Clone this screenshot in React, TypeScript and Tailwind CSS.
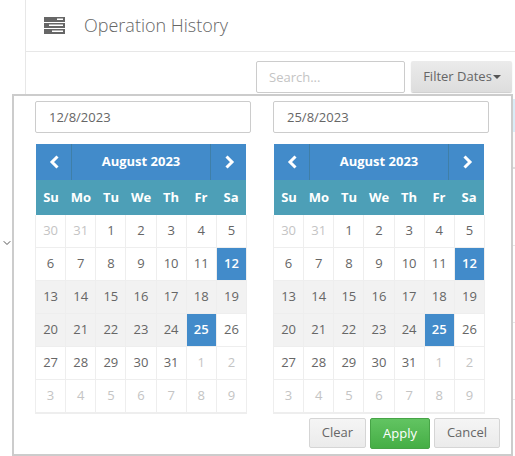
import React from "react";
import { ChevronDown } from "lucide-react";

const weekDays = ["Su", "Mo", "Tu", "We", "Th", "Fr", "Sa"];

// [label, kind] : o = other month, n = normal, r = in range, s = selected
const cells: [string, string][] = [
  ["30", "o"], ["31", "o"], ["1", "n"], ["2", "n"], ["3", "n"], ["4", "n"], ["5", "n"],
  ["6", "n"], ["7", "n"], ["8", "n"], ["9", "n"], ["10", "n"], ["11", "n"], ["12", "s"],
  ["13", "r"], ["14", "r"], ["15", "r"], ["16", "r"], ["17", "r"], ["18", "r"], ["19", "r"],
  ["20", "r"], ["21", "r"], ["22", "r"], ["23", "r"], ["24", "r"], ["25", "s"], ["26", "n"],
  ["27", "n"], ["28", "n"], ["29", "n"], ["30", "n"], ["31", "n"], ["1", "o"], ["2", "o"],
  ["3", "o"], ["4", "o"], ["5", "o"], ["6", "o"], ["7", "o"], ["8", "o"], ["9", "o"],
];

const cellStyles: Record<string, string> = {
  o: "bg-white text-[#c4c4c4]",
  n: "bg-white text-[#666666]",
  r: "bg-[#f2f2f2] text-[#666666]",
  s: "bg-[#428bca] text-white font-semibold",
};

const ArrowLeft = () => (
  <svg width="12" height="14" viewBox="0 0 12 14" fill="none" className="ml-[2px]">
    <path d="M8.5 1.5 3 7l5.5 5.5" stroke="white" strokeWidth="3" />
  </svg>
);

const ArrowRight = () => (
  <svg width="12" height="14" viewBox="0 0 12 14" fill="none">
    <path d="M3.5 1.5 9 7l-5.5 5.5" stroke="white" strokeWidth="3" />
  </svg>
);

const Calendar = ({ value }: { value: string }) => (
  <div className="w-[216px]">
    <input
      readOnly
      value={value}
      className="block h-[32px] w-[216px] rounded-[2px] border border-[#cccccc] bg-white px-[13px] text-[13px] text-[#666666] outline-none"
    />
    <div className="mt-[11px] w-[211px] pl-px">
      <div className="flex h-[36px] bg-[#428bca] text-white">
        <div className="flex w-[36px] items-center justify-center border-r border-[#3f7fa8]">
          <ArrowLeft />
        </div>
        <div className="flex flex-1 items-center justify-center text-[13px] font-bold">August 2023</div>
        <div className="flex w-[36px] items-center justify-center border-l border-[#3f7fa8]">
          <ArrowRight />
        </div>
      </div>
      <div className="grid h-[35px] grid-cols-7 bg-[#4d9fb7] text-white">
        {weekDays.map((d) => (
          <div key={d} className="flex items-center justify-center text-[13px] font-bold">{d}</div>
        ))}
      </div>
      <div className="-ml-px grid w-[212px] grid-cols-7 gap-px border-b-2 border-l border-r border-[#eeeeee] bg-[#eeeeee]">
        {cells.map(([label, kind], i) => (
          <div key={i} className={"flex h-[32px] items-center justify-center text-[13px] " + cellStyles[kind]}>
            {label}
          </div>
        ))}
      </div>
    </div>
  </div>
);

export default function App() {
  return (
    <div
      className="relative h-[456px] w-[515px] overflow-hidden bg-white"
      style={{ fontFamily: '"Open Sans", sans-serif' }}
    >
      <div className="flex h-[456px]">
        <div className="relative w-[26px] shrink-0 border-r border-[#e7e7e7]">
          <ChevronDown className="absolute left-[1px] top-[237px] text-[#555555]" size={12} strokeWidth={2} />
        </div>
        <div className="flex-1">
          <div className="flex h-[52px] items-center border-b border-[#e7e7e7] pb-px pl-[18px]">
            <svg width="21" height="17" viewBox="0 0 21 17" fill="#666666">
              <rect width="21" height="5" />
              <rect y="6" width="21" height="5" />
              <rect y="12" width="21" height="5" />
              <rect x="13" y="1.5" width="6" height="1.5" fill="#ffffff" />
              <rect x="5" y="7.5" width="14" height="1.5" fill="#ffffff" />
              <rect x="8" y="13.5" width="11" height="1.5" fill="#ffffff" />
            </svg>
            <h1 className="ml-[19px] text-[18px] font-light text-[#666666]">Operation History</h1>
          </div>
          <div className="flex h-[47px] justify-end gap-[6px] pr-[3px] pt-[9px]">
            <input
              readOnly
              placeholder="Search..."
              className="h-[32px] w-[149px] rounded-[2px] border border-[#cccccc] px-[12px] text-[13px] outline-none placeholder:text-[#c4c4c4]"
            />
            <button className="flex h-[31px] w-[101px] items-center justify-center rounded-[2px] bg-gradient-to-b from-[#ebebeb] to-[#dddddd] pl-[1px] text-[13px] text-[#666666] shadow-[0_1px_1px_rgba(0,0,0,0.2)]">
              Filter Dates
              <span className="ml-[1px] h-0 w-0 border-x-[4px] border-t-[4px] border-x-transparent border-t-[#555555]" />
            </button>
          </div>
          {/* table behind the popup, only its right edge shows */}
          <div className="h-[33px] bg-[#d9edf7]" />
          <div className="h-[37px] border-b-2 border-[#dddddd] bg-[#fafafa]" />
          <div className="h-[77px] border-b border-[#e7e7e7]" />
          <div className="h-[77px] border-b border-[#e7e7e7]" />
          <div className="h-[77px] border-b border-[#e7e7e7]" />
        </div>
      </div>

      <div className="absolute left-[12px] top-[94px] h-[362px] w-[501px] border-2 border-[#cccccc] bg-white">
        <div className="flex gap-[22px] pl-[21px] pt-[5px]">
          <Calendar value="12/8/2023" />
          <Calendar value="25/8/2023" />
        </div>
        <div className="mt-[4px] flex justify-end gap-[4px] pr-[11px]">
          <button className="h-[30px] w-[57px] rounded-[2px] border border-[#d5d5d5] bg-gradient-to-b from-[#f5f5f5] to-[#ebebeb] text-[13px] text-[#666666]">
            Clear
          </button>
          <button className="h-[31px] w-[60px] rounded-[2px] border border-[#47a447] bg-gradient-to-b from-[#62c462] to-[#45ae45] text-[13px] text-white">
            Apply
          </button>
          <button className="h-[30px] w-[66px] rounded-[2px] border border-[#d5d5d5] bg-gradient-to-b from-[#f5f5f5] to-[#ebebeb] text-[13px] text-[#666666]">
            Cancel
          </button>
        </div>
      </div>
    </div>
  );
}
